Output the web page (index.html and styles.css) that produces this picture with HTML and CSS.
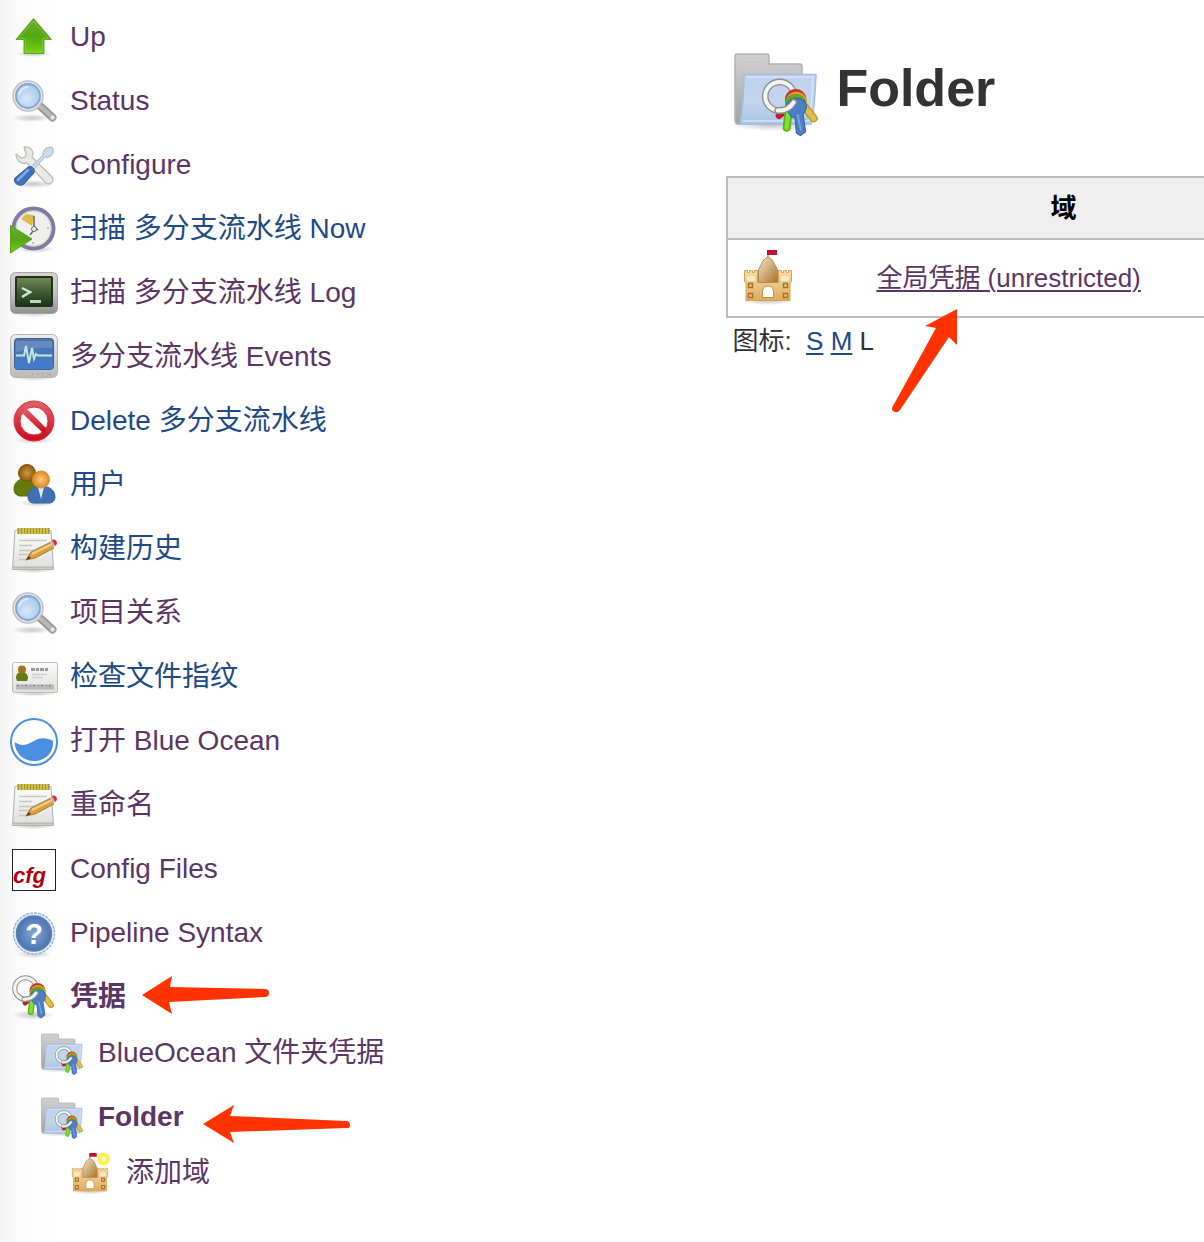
FILE: index.html
```html
<!DOCTYPE html>
<html lang="zh-CN">
<head>
<meta charset="utf-8">
<meta name="viewport" content="width=device-width, initial-scale=1">
<title>Folder</title>
<link rel="stylesheet" href="styles.css">
</head>
<body>
<svg class="sprite" aria-hidden="true">
  <defs>
    <linearGradient id="g-green" x1="0" y1="0" x2="0" y2="1"><stop offset="0" stop-color="#6aae35"/><stop offset=".5" stop-color="#55a713"/><stop offset="1" stop-color="#73d216"/></linearGradient>
    <linearGradient id="g-silver" x1="0" y1="0" x2="0" y2="1"><stop offset="0" stop-color="#d3d6d1"/><stop offset=".5" stop-color="#c2c4bf"/><stop offset="1" stop-color="#8f918d"/></linearGradient>
    <linearGradient id="g-light" x1="0" y1="0" x2="0" y2="1"><stop offset="0" stop-color="#ededea"/><stop offset="1" stop-color="#b9bbb6"/></linearGradient>
    <linearGradient id="g-term" x1="0" y1="0" x2="0" y2="1"><stop offset="0" stop-color="#6d8a52"/><stop offset=".45" stop-color="#46613a"/><stop offset="1" stop-color="#1d3318"/></linearGradient>
    <linearGradient id="g-screen" x1="0" y1="0" x2="0" y2="1"><stop offset="0" stop-color="#4f74ad"/><stop offset="1" stop-color="#427bd0"/></linearGradient>
    <linearGradient id="g-red" x1="0" y1="0" x2="0" y2="1"><stop offset="0" stop-color="#e2626b"/><stop offset="1" stop-color="#cc0a18"/></linearGradient>
    <linearGradient id="g-page" x1="0" y1="0" x2="0" y2="1"><stop offset="0" stop-color="#fcfcfc"/><stop offset="1" stop-color="#dededc"/></linearGradient>
    <linearGradient id="g-back" x1="0" y1="0" x2="0" y2="1"><stop offset="0" stop-color="#d2d2d2"/><stop offset="1" stop-color="#a2a2a2"/></linearGradient>
    <linearGradient id="g-front" x1="0" y1="0" x2="0" y2="1"><stop offset="0" stop-color="#bdd3ef"/><stop offset=".55" stop-color="#c3d5ec"/><stop offset="1" stop-color="#aac4e6"/></linearGradient>
    <linearGradient id="g-sand" x1="0" y1="0" x2="0" y2="1"><stop offset="0" stop-color="#f6dcab"/><stop offset="1" stop-color="#e0ac5e"/></linearGradient>
    <linearGradient id="g-keep" x1="0" y1="0" x2="1" y2="1"><stop offset="0" stop-color="#f3e6cf"/><stop offset="1" stop-color="#a87325"/></linearGradient>
    <radialGradient id="g-lens" cx=".45" cy=".6" r=".6"><stop offset="0" stop-color="#d6e8fb"/><stop offset="1" stop-color="#a9c7ea"/></radialGradient>
    <radialGradient id="g-shadow"><stop offset="0" stop-color="#000" stop-opacity=".22"/><stop offset="1" stop-color="#000" stop-opacity="0"/></radialGradient>
    <radialGradient id="g-brown"><stop offset="0" stop-color="#c99a52"/><stop offset="1" stop-color="#8f5902"/></radialGradient>
    <radialGradient id="g-orange"><stop offset="0" stop-color="#f8c987"/><stop offset="1" stop-color="#df8a1a"/></radialGradient>
    <radialGradient id="g-help"><stop offset="0" stop-color="#84a6d4"/><stop offset="1" stop-color="#4a74b0"/></radialGradient>
    <radialGradient id="g-sun"><stop offset="0" stop-color="#fffde0"/><stop offset=".25" stop-color="#fff9a0"/><stop offset=".5" stop-color="#fcee3c"/><stop offset=".8" stop-color="#fdf372"/><stop offset="1" stop-color="#fff" stop-opacity="0"/></radialGradient>
  </defs>

  <symbol id="i-up" viewBox="0 0 48 48">
    <ellipse cx="24" cy="40" rx="19" ry="3" fill="url(#g-shadow)"/>
    <path d="M23.500 4.500 41.500 25.500H34V39.500H14V25.500H6z" fill="url(#g-green)" stroke="#59a821" stroke-linejoin="round"/>
    <path d="M23.500 7 38 24.500H32.500V38H15.500V24.500H9z" fill="none" stroke="#8fdc4c" stroke-opacity=".5"/>
  </symbol>

  <symbol id="i-search" viewBox="0 0 48 48">
    <ellipse cx="22" cy="40" rx="20" ry="4" fill="url(#g-shadow)"/>
    <path d="M29 27 42.500 39.500" stroke="#9a9b98" stroke-width="8" stroke-linecap="round"/>
    <path d="M31 29 42 39" stroke="#b9bab7" stroke-width="4" stroke-linecap="round"/>
    <circle cx="42.500" cy="39.500" r="2.500" fill="#ececea" stroke="#aaa"/>
    <circle cx="18" cy="18" r="15" fill="#e6e6e3" stroke="#c0c2bd" stroke-width="1.500"/>
    <circle cx="18" cy="18" r="12" fill="url(#g-lens)" stroke="#7fa3d5" stroke-width="1.800"/>
    <path d="M9 17a9 9 0 0 1 9-8" fill="none" stroke="#dcebfb" stroke-width="2"/>
  </symbol>

  <symbol id="i-tools" viewBox="0 0 48 48">
    <ellipse cx="23" cy="42" rx="22" ry="4" fill="url(#g-shadow)"/>
    <path d="M14 5C20 4 25 9 22 15L42 35C45 39 40 44 36 41L17 21C11 23 6 18 6 12L11 16Q17 16 16 11z" fill="#e9e9e7" stroke="#bcbeb9" stroke-width="1.300" stroke-linejoin="round"/>
    <path d="M20 26 33 13C32 9 36 5 41 5Q44 6 43 9C43 13 40 16 35 15L23 28z" fill="#cfdbe8" stroke="#a3b6cc" stroke-linejoin="round"/>
    <path d="M18 25C21 23 26 27 24 31L14 42C11 45 2 42 5 36z" fill="#3f72b7" stroke="#3565a4"/>
    <path d="M18 28 8 38" stroke="#83a9dc" stroke-width="2.500" stroke-linecap="round"/>
  </symbol>

  <symbol id="i-clock" viewBox="0 0 48 48">
    <ellipse cx="26" cy="43" rx="20" ry="4" fill="url(#g-shadow)"/>
    <circle cx="23.500" cy="22.500" r="20" fill="#efefed" stroke="#807b9f" stroke-width="4"/>
    <circle cx="23.500" cy="22.500" r="17.500" fill="none" stroke="#c9c8d4"/>
    <path d="M22 20 11 13 16 8 24 9z" fill="#dfbb4b"/>
    <path d="M24 10V22L28 24M24 24 20 29" fill="none" stroke="#666864" stroke-width="1.500"/>
    <circle cx="24" cy="23" r="2.500" fill="#eee" stroke="#666864"/>
    <path d="M37 22h2M23 36v2" stroke="#b5b5b5" stroke-width="1.500"/>
    <path d="M.5 19.500 22 33 .5 47z" fill="url(#g-green)" stroke="#52a51a"/>
  </symbol>

  <symbol id="i-terminal" viewBox="0 0 48 48">
    <ellipse cx="24" cy="43" rx="22" ry="4" fill="url(#g-shadow)"/>
    <rect x=".5" y="2.500" width="47" height="41" rx="5" fill="url(#g-silver)" stroke="#a5a7a3"/>
    <rect x="5" y="6" width="38" height="31" rx="2" fill="#22301d"/>
    <rect x="7" y="8" width="34" height="27" fill="url(#g-term)"/>
    <path d="M12 18 20 22 12 27" fill="none" stroke="#cfe6cf" stroke-width="2.500"/>
    <path d="M20 31.500H31" stroke="#b9d6b8" stroke-width="3"/>
    <circle cx="33" cy="39" r="1.300" fill="#6bd40f"/>
  </symbol>

  <symbol id="i-monitor" viewBox="0 0 48 48">
    <ellipse cx="24" cy="43" rx="22" ry="4" fill="url(#g-shadow)"/>
    <rect x=".5" y=".5" width="47" height="43" rx="5" fill="url(#g-light)" stroke="#b4b6b1"/>
    <rect x="4.500" y="4.500" width="39" height="31" rx="3" fill="url(#g-screen)" stroke="#3b6199"/>
    <path d="M6 7H42V14Q24 13 6 18z" fill="#fff" opacity=".15"/>
    <path d="M6 21.500H14L16 12 19 29 22 14 24 25 26 20 28 21.500H42" fill="none" stroke="#c3e8d6" stroke-width="2"/>
    <path d="M22 40h2m3 0h2m3 0h2m3 0h4" stroke="#aaa" stroke-width="1.500"/>
  </symbol>

  <symbol id="i-delete" viewBox="0 0 48 48">
    <ellipse cx="24" cy="42" rx="20" ry="4" fill="url(#g-shadow)"/>
    <path fill-rule="evenodd" d="M24 3a20 20 0 1 1 0 40 20 20 0 0 1 0-40zM24 9a14 14 0 1 0 0 28 14 14 0 0 0 0-28z" fill="url(#g-red)" stroke="#cf3540"/>
    <path d="M12 15 16 10 37 31 33 35z" fill="url(#g-red)"/>
  </symbol>

  <symbol id="i-users" viewBox="0 0 48 48">
    <ellipse cx="28" cy="41" rx="18" ry="4" fill="url(#g-shadow)"/>
    <path d="M4 27C4 20 10 16 17 16 25 16 28 22 28 28L24 34H10Q4 33 4 27z" fill="#667b0c" stroke="#56700a"/>
    <circle cx="17" cy="11" r="8.500" fill="url(#g-brown)" stroke="#85530a"/>
    <path d="M18 35C18 27 24 24 31 24 39 24 45 28 45 35 45 39 42 41 39 41H23Q18 40 18 35z" fill="#3f70b3" stroke="#3564a2"/>
    <path d="M28 25 31 37 34 25z" fill="#dfe8f3"/>
    <circle cx="31" cy="17.500" r="8.500" fill="url(#g-orange)" stroke="#d68c2b"/>
  </symbol>

  <symbol id="i-notepad" viewBox="0 0 48 48">
    <ellipse cx="24" cy="44" rx="21" ry="3" fill="url(#g-shadow)"/>
    <path d="M5 4.500H41L43.500 43.500H2.500z" fill="url(#g-page)" stroke="#b0b2ae" stroke-linejoin="round"/>
    <path d="M3 41.500H43" stroke="#b9bab7" stroke-width="2"/>
    <rect x="7" y="2" width="33" height="6" fill="#d0bd4b"/>
    <path d="M8 5H40" stroke="#a6932f" stroke-width="6" stroke-dasharray="1 2"/>
    <path d="M9 14.500H37M9 19.500H22M9 24.500H27M9 28.500H23M9 33.500H16" stroke="#c6c6c6" stroke-width="1.500"/>
    <path d="M16 34 21 26 41 16 44 22 25 32z" fill="#dba03c" stroke="#ad7a24"/>
    <path d="M22 28 42 18" stroke="#f3ce83" stroke-width="2"/>
    <path d="M16 34 19 30 21 32z" fill="#433"/>
    <path d="M40 16 42.500 15 45 20 43 22z" fill="#bbb"/>
    <path d="M42 14C46 12 49 18 45 20z" fill="#df2a35"/>
  </symbol>

  <symbol id="i-card" viewBox="0 0 48 48">
    <ellipse cx="25" cy="40" rx="22" ry="2" fill="url(#g-shadow)"/>
    <rect x="2.500" y="8.500" width="45" height="30" rx="2" fill="url(#g-page)" stroke="#bcbeba"/>
    <path d="M6 24C6 19 9 18 12 18s6 2 6 6l-1 3H7z" fill="#5f7f12"/>
    <circle cx="12" cy="15.500" r="4" fill="#a8731f"/>
    <path d="M21 15.500H38" stroke="#999" stroke-width="3" stroke-dasharray="4 1 3 1"/>
    <path d="M22 20.500H37M22 23.500H33" stroke="#cfcfcf" stroke-width="1.500"/>
    <path d="M6 33H44" stroke="#b9b9b9" stroke-width="5"/>
    <path d="M7 31.500H44" stroke="#888" stroke-width="1.500" stroke-dasharray="2 3 1 2"/>
  </symbol>

  <symbol id="i-ocean" viewBox="0 0 48 48">
    <circle cx="24" cy="24" r="23" fill="#fff" stroke="#4a90e2" stroke-width="2"/>
    <path d="M4.500 24C12 29 17 27 24 23 31 19 37 20 43 23 44 35 35 43 24 43 13 43 5 35 4.500 24z" fill="#4a8fe0"/>
  </symbol>

  <symbol id="i-keys-only" viewBox="0 0 48 48">
    <g fill="none" stroke-linecap="round">
      <path d="M20 25 15 29" stroke="#c41a33" stroke-width="5"/>
      <path d="M34 22 41 31" stroke="#b8932a" stroke-width="6"/>
      <path d="M34 22 41 31" stroke="#e2bf45" stroke-width="4"/>
      <path d="M22 27 20.800 38" stroke="#5aad15" stroke-width="6"/>
      <path d="M22 27 20.800 38" stroke="#80e02a" stroke-width="3.500"/>
    </g>
    <circle cx="15.500" cy="14.500" r="10.800" fill="none" stroke="#8f8f8f" stroke-width="5"/>
    <circle cx="15.500" cy="14.500" r="10.800" fill="none" stroke="#f3f3f3" stroke-width="3"/>
    <circle cx="27.500" cy="17" r="8" fill="#cf2f2b"/>
    <circle cx="28" cy="19" r="8" fill="#d9a52a"/>
    <circle cx="27.500" cy="20.500" r="8" fill="#6aa327"/>
    <path d="M21 22C21 16 29 14 34 18 37 22 35 26 33 28L35 41 31 44 28 42 27 31C23 30 21 26 21 22z" fill="#4d7fc4" stroke="#3565a8" stroke-width=".8"/>
    <path d="M29 28 31.500 40" stroke="#7aa3da" stroke-width="1.500"/>
    <path d="M14 25.200Q22 25.500 26 19" fill="none" stroke="#8f8f8f" stroke-width="5" stroke-linecap="round"/>
    <path d="M14 25.200Q22 25.500 26 19" fill="none" stroke="#f3f3f3" stroke-width="3" stroke-linecap="round"/>
  </symbol>

  <symbol id="i-keys" viewBox="0 0 48 48">
    <ellipse cx="23" cy="41" rx="21" ry="5" fill="url(#g-shadow)"/>
    <use href="#i-keys-only" width="48" height="48"/>
  </symbol>

  <symbol id="i-folder" viewBox="0 0 96 96">
    <ellipse cx="44" cy="79" rx="42" ry="6" fill="url(#g-shadow)"/>
    <path d="M8 8H39Q41 8 41 10V18H72Q74 18 74 20V78H10Q7 78 7 74V10Q7 8 8 8z" fill="url(#g-back)" stroke="#b2b2b2" stroke-width="1.500"/>
    <path d="M10 12H38M10 16H38M10 21H71M10 25H71" stroke="#c9c9c9"/>
    <path d="M17 28.500H88Q87 60 83 78H12Q15 66 16 30z" fill="url(#g-front)" stroke="#a3bee3" stroke-width="1.500" stroke-linejoin="round"/>
    <path d="M19 31H85Q84 59 81 75H15" fill="none" stroke="#d6e3f5" stroke-width="1.500"/>
    <use href="#i-keys-only" x="31" y="31" width="64" height="64"/>
  </symbol>

  <symbol id="i-castle" viewBox="0 0 64 64">
    <ellipse cx="32" cy="55" rx="27" ry="4" fill="url(#g-shadow)"/>
    <path d="M32 5V14" stroke="#777"/>
    <path d="M31 4H41V9H31z" fill="#c5122b"/>
    <path d="M8.500 24.500h3v2h2v-2h3v2h2v-2h3V36.500h21V24.500h3v2h2v-2h3v2h2v-2h3V35L54 38V54.500H10V38L8.500 35z" fill="url(#g-sand)" stroke="#d9a252"/>
    <path d="M11 30h8v5h-8zM45 30h8v5h-8z" fill="#fbe9c6"/>
    <path d="M22.500 36.500V24L27 15Q32 8 37 15L41.500 24V36.500z" fill="url(#g-keep)" stroke="#bb8a42"/>
    <path d="M12.500 37.500h4v4h-4zM12.500 47.500h4v4h-4zM47.500 37.500h4v4h-4zM47.500 47.500h4v4h-4z" fill="#eec583" stroke="#a87228" stroke-width="1.500"/>
    <path d="M26.500 51.500V46Q26.500 40 32 40T37.500 46V51.500z" fill="#fff" stroke="#c48e42"/>
  </symbol>

  <symbol id="i-castle-new" viewBox="0 0 64 64">
    <use href="#i-castle" width="64" height="64"/>
    <circle cx="50" cy="12" r="10" fill="url(#g-sun)"/>
  </symbol>
</svg>

<div class="page">
  <nav class="sidebar" aria-label="Tasks">
    <ul class="tasks">
      <li><a class="task visited" href="#up"><svg class="icon"><use href="#i-up"/></svg><span>Up</span></a></li>
      <li><a class="task visited" href="#status"><svg class="icon"><use href="#i-search"/></svg><span>Status</span></a></li>
      <li><a class="task visited" href="#configure"><svg class="icon"><use href="#i-tools"/></svg><span>Configure</span></a></li>
      <li><a class="task" href="#scan"><svg class="icon"><use href="#i-clock"/></svg><span>扫描 多分支流水线 Now</span></a></li>
      <li><a class="task visited" href="#log"><svg class="icon"><use href="#i-terminal"/></svg><span>扫描 多分支流水线 Log</span></a></li>
      <li><a class="task visited" href="#events"><svg class="icon"><use href="#i-monitor"/></svg><span>多分支流水线 Events</span></a></li>
      <li><a class="task" href="#delete"><svg class="icon"><use href="#i-delete"/></svg><span>Delete 多分支流水线</span></a></li>
      <li><a class="task" href="#people"><svg class="icon"><use href="#i-users"/></svg><span>用户</span></a></li>
      <li><a class="task" href="#builds"><svg class="icon"><use href="#i-notepad"/></svg><span>构建历史</span></a></li>
      <li><a class="task visited" href="#relations"><svg class="icon"><use href="#i-search"/></svg><span>项目关系</span></a></li>
      <li><a class="task" href="#fingerprint"><svg class="icon"><use href="#i-card"/></svg><span>检查文件指纹</span></a></li>
      <li><a class="task visited" href="#blue"><svg class="icon"><use href="#i-ocean"/></svg><span>打开 Blue Ocean</span></a></li>
      <li><a class="task visited" href="#rename"><svg class="icon"><use href="#i-notepad"/></svg><span>重命名</span></a></li>
      <li>
        <a class="task visited" href="#config-files">
          <svg class="icon" viewBox="0 0 48 48">
            <rect x="2.500" y="3.500" width="43" height="41" fill="#fff" stroke="#222"/>
            <text class="cfg-mark" x="3" y="37">cfg</text>
          </svg>
          <span>Config Files</span>
        </a>
      </li>
      <li>
        <a class="task visited" href="#syntax">
          <svg class="icon" viewBox="0 0 48 48">
            <ellipse cx="24" cy="44" rx="18" ry="4" fill="url(#g-shadow)"/>
            <circle cx="24" cy="23.500" r="20.500" fill="#e9eff7" stroke="#9bb3d6" stroke-width="1.500" stroke-dasharray="3 1"/>
            <circle cx="24" cy="23.500" r="17.500" fill="url(#g-help)" stroke="#5a80b8" stroke-width="1.500"/>
            <text class="help-mark" x="24" y="34">?</text>
          </svg>
          <span>Pipeline Syntax</span>
        </a>
      </li>
      <li class="marked">
        <a class="task visited current" href="#credentials"><svg class="icon"><use href="#i-keys"/></svg><span>凭据</span></a>
        <svg class="arrow arrow-credentials" viewBox="0 0 128 38" aria-hidden="true"><path d="M0 19 30 0 28 11 123 13Q127 13 127 17T123 21L27 26 30 38z"/></svg>
        <ul class="subtasks">
          <li><a class="task visited" href="#blueocean-folder"><svg class="icon"><use href="#i-folder"/></svg><span>BlueOcean 文件夹凭据</span></a></li>
          <li class="marked">
            <a class="task visited current" href="#folder"><svg class="icon"><use href="#i-folder"/></svg><span>Folder</span></a>
            <svg class="arrow arrow-folder" viewBox="0 0 148 38" aria-hidden="true"><path d="M0 19 31 0 27 11 143 16Q147 16 147 20T143 23L27 27 31 38z"/></svg>
            <ul class="subtasks">
              <li><a class="task visited" href="#add-domain"><svg class="icon"><use href="#i-castle-new"/></svg><span>添加域</span></a></li>
            </ul>
          </li>
        </ul>
      </li>
    </ul>
  </nav>

  <main class="content">
    <header class="heading">
      <svg class="icon-large"><use href="#i-folder"/></svg>
      <h1>Folder</h1>
    </header>
    <div class="marked">
      <table class="domains">
        <thead>
          <tr><th colspan="2" scope="col">域</th></tr>
        </thead>
        <tbody>
          <tr>
            <td class="domain-icon"><svg class="icon-medium"><use href="#i-castle"/></svg></td>
            <td><a class="visited" href="#global">全局凭据 (unrestricted)</a></td>
          </tr>
        </tbody>
      </table>
      <svg class="arrow arrow-domain" viewBox="0 0 66 104" aria-hidden="true"><path d="M65 0V36L57 28 8 101Q5 105 1 102-1 100 1 97L44 19 33 17z"/></svg>
    </div>
    <p class="sizes">图标:&nbsp; <a href="#s">S</a> <a href="#m">M</a> L</p>
  </main>
</div>
</body>
</html>
```
FILE: styles.css
```css
* {
  box-sizing: border-box;
}

body {
  margin: 0;
  color: #333;
  background: #fff;
  font-family: "Liberation Sans", Arial, "Noto Sans CJK SC", sans-serif;
  font-size: 26px;
  line-height: 30px;
}

ul {
  margin: 0;
  padding: 0;
  list-style: none;
}

a {
  color: #204a87;
}

a.visited {
  color: #5c3566;
}

.sprite {
  position: absolute;
  width: 0;
  height: 0;
}

.page {
  display: grid;
  grid-template-columns: 60% minmax(0, 1fr);
  min-height: 100vh;
  overflow: hidden;
  background: linear-gradient(to right, #f3f3f3, #fafafa 12px, #fdfdfd 36px, #fff 64px);
}

/* Sidebar */

.sidebar {
  padding: 14px 10px;
}

.tasks {
  display: flex;
  flex-direction: column;
  gap: 16px;
}

.subtasks {
  display: flex;
  flex-direction: column;
  gap: 16px;
  margin-top: 8px;
  padding-left: 28px;
}

.task {
  display: flex;
  gap: 12px;
  font-size: 28px;
  line-height: 46px;
  text-decoration: none;
  white-space: nowrap;
}

.current {
  font-weight: bold;
}

.icon {
  flex: none;
  width: 48px;
  height: 48px;
}

.cfg-mark {
  fill: #b3000f;
  font: italic bold 22px "Liberation Sans", Arial, sans-serif;
}

.help-mark {
  fill: #fff;
  font: bold 29px "Liberation Sans", Arial, sans-serif;
  text-anchor: middle;
}

/* Main column */

.content {
  padding: 46px 0 0 4px;
}

.heading {
  display: flex;
  gap: 12px;
  margin-bottom: 34px;
  padding-left: 2px;
}

.icon-large {
  flex: none;
  width: 96px;
  height: 96px;
}

h1 {
  margin: 0;
  font-size: 52px;
  line-height: 84px;
}

.domains {
  width: 100%;
  min-width: 674px;
  border: 2px solid #bbb;
  border-spacing: 0;
}

.domains th {
  height: 62px;
  padding: 0;
  border-bottom: 2px solid #bbb;
  background: #efefef;
  color: #000;
}

.domains td {
  padding: 6px 8px;
}

.domains .domain-icon {
  width: 140px;
}

.icon-medium {
  display: block;
  width: 64px;
  height: 64px;
}

.domains a,
.sizes a {
  text-underline-offset: 3px;
  text-decoration-thickness: 2px;
}

.sizes {
  margin: 8px 0 0;
  padding-left: 6px;
}

/* Red pointers laid over the page */

.marked {
  position: relative;
}

.arrow {
  position: absolute;
  fill: #ff3300;
  pointer-events: none;
}

.arrow-credentials {
  top: 2px;
  left: 132px;
  width: 128px;
  height: 38px;
}

.arrow-folder {
  top: 11px;
  left: 165px;
  width: 148px;
  height: 38px;
}

.arrow-domain {
  top: 133px;
  left: 166px;
  width: 66px;
  height: 104px;
}
```
